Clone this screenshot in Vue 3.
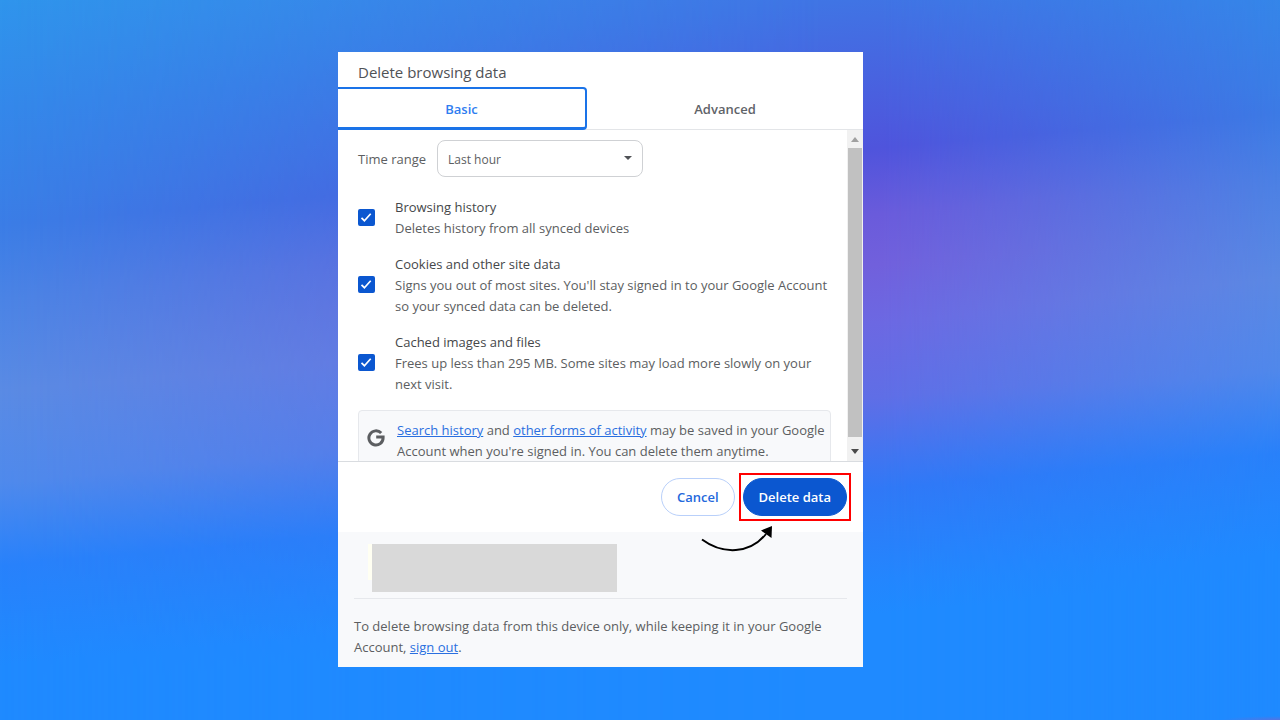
<script setup>
import { ref } from 'vue'

const tab = ref('basic')
const range = ref('Last hour')
const ranges = ['Last hour', 'Last 24 hours', 'Last 7 days', 'Last 4 weeks', 'All time']
const items = ref([
  { id: 'history', title: 'Browsing history', note: 'Deletes history from all synced devices', on: true },
  {
    id: 'cookies',
    title: 'Cookies and other site data',
    note: "Signs you out of most sites. You'll stay signed in to your Google Account so your synced data can be deleted.",
    on: true,
  },
  {
    id: 'cache',
    title: 'Cached images and files',
    note: 'Frees up less than 295 MB. Some sites may load more slowly on your next visit.',
    on: true,
  },
])
</script>

<template>
  <main class="page">
    <section class="dialog" role="dialog" aria-labelledby="dialog-title">
      <h1 id="dialog-title" class="title">Delete browsing data</h1>

      <div class="tabs" role="tablist">
        <button class="tab" :class="{ active: tab === 'basic' }" role="tab" :aria-selected="tab === 'basic'" @click="tab = 'basic'">Basic</button>
        <button class="tab" :class="{ active: tab === 'advanced' }" role="tab" :aria-selected="tab === 'advanced'" @click="tab = 'advanced'">Advanced</button>
      </div>

      <div class="viewport">
        <div class="content">
          <div class="range">
            <label for="range">Time range</label>
            <div class="select-wrap">
              <select id="range" v-model="range">
                <option v-for="r in ranges" :key="r">{{ r }}</option>
              </select>
              <svg class="caret" viewBox="0 0 8 4" aria-hidden="true"><path d="M0 0h8L4 4z" /></svg>
            </div>
          </div>

          <label v-for="item in items" :key="item.id" class="item" :for="item.id">
            <span class="check">
              <input :id="item.id" v-model="item.on" type="checkbox" />
              <svg v-if="item.on" viewBox="0 0 17 17" aria-hidden="true"><path d="M3.500 8.800l2.900 2.900 6.300-6.900" /></svg>
            </span>
            <span class="item-text">
              <span class="item-title">{{ item.title }}</span>
              <span>{{ item.note }}</span>
            </span>
          </label>

          <div class="info">
            <svg class="google" viewBox="0 0 18 18" aria-hidden="true">
              <path d="M14.200 4.100A7.100 7.100 0 1 0 16.100 9v-.9H9.200" />
            </svg>
            <p>
              <a href="#">Search history</a> and <a href="#">other forms of activity</a> may be saved in your Google
              Account when you're signed in. You can delete them anytime.
            </p>
          </div>
        </div>

        <div class="scrollbar" aria-hidden="true">
          <svg class="up" viewBox="0 0 8 5"><path d="M0 5h8L4 0z" /></svg>
          <div class="thumb"></div>
          <svg class="down" viewBox="0 0 8 5"><path d="M0 0h8L4 5z" /></svg>
        </div>
      </div>

      <footer class="actions">
        <button class="btn cancel">Cancel</button>
        <div class="highlight"><button class="btn delete">Delete data</button></div>
        <svg class="arrow" viewBox="0 0 74 28" aria-hidden="true">
          <path class="curve" d="M2 13.500C23 29 50 28 66 8" />
          <path d="M72 0L61 4.500L71.500 12z" />
        </svg>
      </footer>

      <div class="account">
        <div class="profile">
          <div class="avatar"></div>
          <div class="redacted"></div>
        </div>
        <p>
          To delete browsing data from this device only, while keeping it in your Google Account,
          <a href="#">sign out</a>.
        </p>
      </div>
    </section>
  </main>
</template>

<style>
body {
  margin: 0;
}
</style>

<style scoped>
.page {
  position: relative;
  isolation: isolate;
  box-sizing: border-box;
  display: flex;
  justify-content: center;
  align-items: flex-start;
  min-height: 100vh;
  padding: 52px 79px 53px 0;
  overflow: hidden;
  font-family: "Open Sans", "Noto Sans", sans-serif;
  font-size: 13px;
  line-height: 21px;
  color: #5c5e61;
  background:
    radial-gradient(ellipse 60px 4px at 100% 100%, #5a72e0, rgba(60, 125, 240, 0) 100%),
    linear-gradient(175deg, #2f95ec 0%, #3488ea 13%, #3b7de6 27%, #4b84e5 36%, #5a8be4 47%, #4f8aec 58%, #2882fb 68%, #1f8aff 80%);
}
.page::before {
  content: "";
  position: absolute;
  inset: 0;
  z-index: -1;
  background: linear-gradient(175deg, #3f80e8 0%, #4074e4 9%, #4f54dc 27%, #6a5bdb 35%, #7160dc 41%, #6c68e2 48%, #5f6ee6 57%, #3078f6 68%, #2386fe 79%, #1f8aff 83%);
  mask-image: linear-gradient(90deg, transparent, #000 64%, #000 69%, transparent 102%);
}
.dialog {
  width: 100%;
  max-width: 525px;
  background: #fff;
}
.title {
  margin: 0;
  padding: 10px 20px 5px;
  font-size: 15px;
  font-weight: 400;
  line-height: 21px;
  color: #505256;
}
.tabs {
  display: grid;
  grid-template-columns: 249px 1fr;
  height: 42px;
  border-bottom: 1px solid #e3e5e8;
  box-sizing: border-box;
}
.tab {
  padding: 0;
  border: 0;
  background: none;
  font: 600 13px/21px "Open Sans", "Noto Sans", sans-serif;
  color: #5f6368;
}
.tab.active {
  height: 43px;
  box-sizing: border-box;
  margin-top: -1px;
  padding-top: 2px;
  border: 2px solid #1a73e8;
  border-left-width: 0;
  border-bottom-width: 3px;
  border-radius: 0 4px 4px 0;
  color: #2f7df0;
}
.viewport {
  display: flex;
  height: 331px;
  overflow: hidden;
  border-bottom: 1px solid #d9dce0;
}
.content {
  flex: 1;
  display: flex;
  flex-direction: column;
  gap: 15px;
  padding: 10px 12px 0 20px;
}
.range {
  display: flex;
  align-items: center;
  gap: 11px;
  margin-bottom: 5px;
}
.range label {
  padding-top: 2px;
}
.select-wrap {
  position: relative;
  width: 206px;
}
select {
  display: block;
  width: 100%;
  height: 37px;
  padding: 2px 10px 0;
  border: 1px solid #cfd1d4;
  border-radius: 8px;
  appearance: none;
  background: #fff;
  font: 12px/21px "Open Sans", "Noto Sans", sans-serif;
  color: #5c5e61;
}
.caret {
  position: absolute;
  top: 16px;
  right: 11px;
  width: 8px;
  height: 4px;
  fill: #505256;
}
.item {
  display: flex;
  align-items: center;
  gap: 20px;
}
.check {
  position: relative;
  flex: none;
  width: 17px;
  height: 17px;
  margin-bottom: 2px;
}
.check input {
  display: block;
  width: 17px;
  height: 17px;
  margin: 0;
  border: 2px solid #5f6368;
  border-radius: 2px;
  appearance: none;
}
.check input:checked {
  border-color: #0b57d0;
  background: #0b57d0;
}
.check svg {
  position: absolute;
  inset: 0;
  fill: none;
  stroke: #fff;
  stroke-width: 1.7;
  pointer-events: none;
}
.item-text {
  display: flex;
  flex-direction: column;
}
.item-title {
  color: #45474a;
}
.info {
  display: flex;
  gap: 12px;
  margin-right: 4px;
  padding: 9px 0 9px 8px;
  border: 1px solid #e6e8ec;
  border-radius: 4px;
  background: #f8f9fb;
}
.google {
  flex: none;
  width: 18px;
  height: 36px;
  fill: none;
  stroke: #5c5e61;
  stroke-width: 3;
}
p {
  margin: 0;
}
a {
  color: #2a6fe0;
  text-underline-offset: 1px;
}
.scrollbar {
  display: flex;
  flex-direction: column;
  align-items: center;
  width: 16px;
  box-sizing: border-box;
  padding: 7px 1px;
  background: #f1f1f1;
}
.scrollbar svg {
  flex: none;
  width: 8px;
  height: 5px;
}
.up {
  fill: #a0a0a0;
}
.down {
  fill: #4a4a4a;
}
.thumb {
  align-self: stretch;
  flex: 1;
  margin: 6px 0 12px;
  background: #c1c1c1;
}
.actions {
  position: relative;
  display: flex;
  justify-content: flex-end;
  align-items: center;
  gap: 4px;
  height: 70px;
  padding-right: 12px;
}
.btn {
  height: 38px;
  padding: 0 15px;
  border: 1px solid #b9d0fa;
  border-radius: 19px;
  background: #fff;
  font: 600 13px/21px "Open Sans", "Noto Sans", sans-serif;
  color: #2468dc;
}
.delete {
  display: block;
  border-color: #0b57d0;
  background: #0b57d0;
  color: #fff;
}
.highlight {
  padding: 3px 2px;
  border: 2px solid #f00;
}
.arrow {
  position: absolute;
  right: 89px;
  bottom: -22px;
  width: 74px;
  height: 28px;
}
.curve {
  fill: none;
  stroke: #000;
  stroke-width: 2;
}
.account {
  padding: 12px 16px 9px;
  background: #f8f9fb;
}
.profile {
  display: flex;
  padding: 0 0 6px 14px;
  margin-bottom: 17px;
  border-bottom: 1px solid #e6e8ec;
}
.avatar {
  width: 4px;
  height: 36px;
  background: #fffff2;
}
.redacted {
  width: 245px;
  height: 48px;
  background: #d9d9d9;
}
</style>
